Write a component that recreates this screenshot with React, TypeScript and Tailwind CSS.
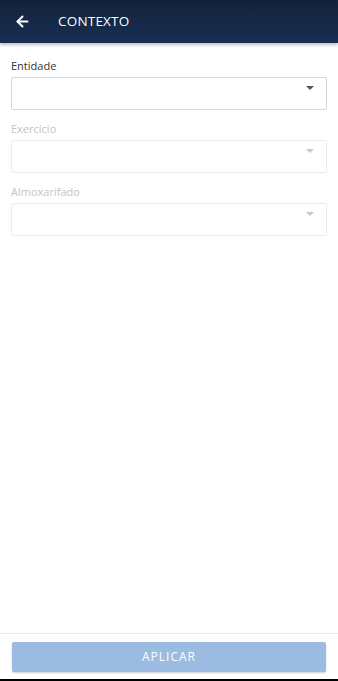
import { ArrowLeft } from "lucide-react";

interface SelectFieldProps {
  label: string;
  disabled?: boolean;
}

function SelectField({ label, disabled }: SelectFieldProps) {
  return (
    <div>
      <label className={`block text-[11px] leading-[14px] mb-[4px] ${disabled ? "text-[#c4c4c4]" : "text-[#333]"}`}>
        {label}
      </label>
      <div
        className={`relative h-[33px] rounded-[2px] border bg-white ${
          disabled ? "border-[#ececec]" : "border-[#d6d6d6]"
        }`}
      >
        <div
          className={`absolute right-[12px] top-[8px] w-0 h-0 border-l-[4px] border-r-[4px] border-t-[4px] border-l-transparent border-r-transparent ${
            disabled ? "border-t-[#c8c8c8]" : "border-t-[#555]"
          }`}
        />
      </div>
    </div>
  );
}

export default function App() {
  return (
    <div
      className="w-[338px] h-[681px] flex flex-col bg-white overflow-hidden"
      style={{ fontFamily: '"Open Sans", "Liberation Sans", sans-serif' }}
    >
      <header className="h-[43px] shrink-0 flex items-center bg-gradient-to-b from-[#12223b] to-[#182f52] shadow-[0_2px_3px_rgba(0,0,0,0.25)] z-10">
        <div className="w-[43px] flex justify-center pl-[1px]">
          <ArrowLeft size={17} strokeWidth={2.8} className="text-white" />
        </div>
        <h1 className="ml-[15px] text-[13.5px] text-white tracking-[0.2px]">CONTEXTO</h1>
      </header>

      <main className="flex-1 px-[11px] pt-[16px] flex flex-col gap-[12px]">
        <SelectField label="Entidade" />
        <SelectField label="Exercício" disabled />
        <SelectField label="Almoxarifado" disabled />
      </main>

      <footer className="shrink-0 border-t border-[#ececec] px-[12px] pt-[8px] pb-[7px]">
        <button className="w-full h-[30px] rounded-[2px] bg-[#9bbbe0] text-white text-[12px] tracking-[1px] shadow-[0_1px_2px_rgba(0,0,0,0.2)]">
          APLICAR
        </button>
      </footer>
      <div className="h-[2px] shrink-0 bg-black" />
    </div>
  );
}
